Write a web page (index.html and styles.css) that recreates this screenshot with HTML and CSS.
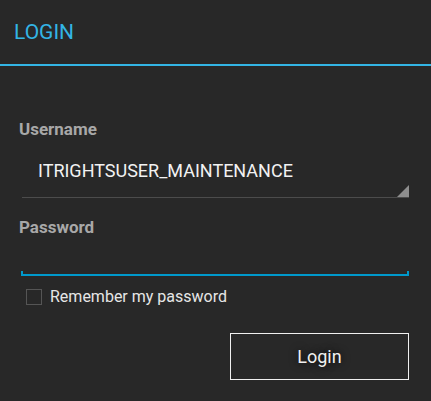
FILE: index.html
```html
<!DOCTYPE html>
<html>
<head>
<meta charset="utf-8">
<link rel="stylesheet" href="styles.css">
</head>
<body>
<div class="dialog">
  <div class="header">
    <div class="title">LOGIN</div>
  </div>
  <div class="content">
    <div class="label label-user">Username</div>
    <div class="spinner">
      <span class="spinner-text">ITRIGHTSUSER_MAINTENANCE</span>
      <span class="spinner-arrow"></span>
    </div>
    <div class="label label-pass">Password</div>
    <div class="edit"></div>
    <div class="check-row">
      <span class="checkbox"></span>
      <span class="check-label">Remember my password</span>
    </div>
    <div class="actions">
      <div class="button">Login</div>
    </div>
  </div>
</div>
</body>
</html>
```
FILE: styles.css
```css
html, body {
  margin: 0;
  padding: 0;
  background: #282828;
}
body {
  width: 431px;
  height: 401px;
  overflow: hidden;
  font-family: Roboto, "Liberation Sans", sans-serif;
}
.header {
  height: 64px;
  border-bottom: 2px solid #33b5e5;
  display: flex;
  align-items: center;
  padding-left: 14px;
}
.title {
  color: #33b5e5;
  font-size: 21px;
  line-height: 22px;
}
.content {
  padding: 0 22px 0 18px;
}
.label {
  color: #a8a8a8;
  font-weight: bold;
  font-size: 17px;
  line-height: 20px;
  padding-left: 1px;
}
.label-user {
  margin-top: 53px;
}
.spinner {
  position: relative;
  margin: 15px 0 0 4px;
  height: 44px;
  border-bottom: 1px solid #4c4c4c;
  box-sizing: border-box;
  padding: 7px 0 0 16px;
}
.spinner-text {
  color: #f2f2f2;
  font-size: 18px;
  line-height: 20px;
}
.spinner-arrow {
  position: absolute;
  right: 0;
  bottom: 0;
  width: 0;
  height: 0;
  border-left: 12px solid transparent;
  border-bottom: 12px solid #8e8e8e;
}
.label-pass {
  margin-top: 19px;
}
.edit {
  margin: 34px 0 0 3px;
  height: 3px;
  border: 2px solid #0099cc;
  border-top: none;
}
.check-row {
  display: flex;
  align-items: center;
  margin-top: 13px;
  padding-left: 8px;
}
.checkbox {
  width: 14px;
  height: 14px;
  border: 1px solid #555;
  box-sizing: content-box;
}
.check-label {
  color: #e6e6e6;
  font-size: 16px;
  margin-left: 8px;
  line-height: 16px;
}
.actions {
  display: flex;
  justify-content: flex-end;
  margin-top: 28px;
}
.button {
  width: 177px;
  height: 45px;
  border: 1px solid #f0f0f0;
  display: flex;
  align-items: center;
  justify-content: center;
  color: #f0f0f0;
  font-size: 18px;
  text-shadow: 0 0 8px rgba(0,0,0,0.9);
}
```
